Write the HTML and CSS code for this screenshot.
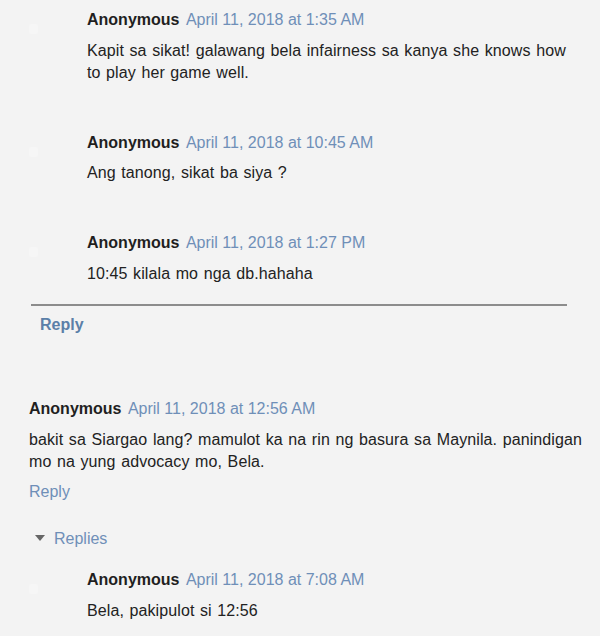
FILE: index.html
```html
<!DOCTYPE html>
<html>
<head>
<meta charset="utf-8">
<link rel="stylesheet" href="styles.css">
</head>
<body>
<div class="page">
  <div class="thread">
    <div class="comment nested first">
      <span class="avatar"></span>
      <div class="head"><span class="name">Anonymous</span> <a class="date">April 11, 2018 at 1:35 AM</a></div>
      <p class="text">Kapit sa sikat! galawang bela infairness sa kanya she knows how to play her game well.</p>
    </div>
    <div class="comment nested">
      <span class="avatar"></span>
      <div class="head"><span class="name">Anonymous</span> <a class="date">April 11, 2018 at 10:45 AM</a></div>
      <p class="text">Ang tanong, sikat ba siya ?</p>
    </div>
    <div class="comment nested">
      <span class="avatar"></span>
      <div class="head"><span class="name">Anonymous</span> <a class="date">April 11, 2018 at 1:27 PM</a></div>
      <p class="text">10:45 kilala mo nga db.hahaha</p>
    </div>
  </div>
  <a class="reply-bold">Reply</a>

  <div class="comment top">
    <div class="head"><span class="name">Anonymous</span> <a class="date">April 11, 2018 at 12:56 AM</a></div>
    <p class="text">bakit sa Siargao lang? mamulot ka na rin ng basura sa Maynila. panindigan mo na yung advocacy mo, Bela.</p>
    <a class="reply">Reply</a>
  </div>
  <div class="replies"><span class="tri"></span><a class="replies-link">Replies</a></div>
  <div class="comment nested last">
    <span class="avatar"></span>
    <div class="head"><span class="name">Anonymous</span> <a class="date">April 11, 2018 at 7:08 AM</a></div>
    <p class="text">Bela, pakipulot si 12:56</p>
  </div>
</div>
</body>
</html>
```

FILE: styles.css
```css
html, body {
  margin: 0;
  padding: 0;
  background: #f3f3f3;
}
body {
  font-family: "Liberation Sans", Arial, sans-serif;
  font-size: 16px;
  line-height: 22px;
  color: #222;
  width: 600px;
  height: 636px;
  overflow: hidden;
}
.page {
  padding-top: 9px;
}
.thread {
  margin-left: 31px;
  width: 536px;
  border-bottom: 2px solid #8c8c8c;
  padding-bottom: 19.5px;
}
.comment {
  position: relative;
}
.nested {
  padding-left: 56px;
  margin-top: 48px;
}
.nested.first {
  margin-top: 0;
}
.last {
  padding-left: 87px;
  margin-top: 19px;
}
.avatar {
  position: absolute;
  left: -2px;
  top: 15px;
  width: 9px;
  height: 10px;
  border-radius: 2px;
  background: #f6f6f6;
}
.last .avatar {
  left: 29px;
}
.head {
  height: 22px;
  white-space: nowrap;
}
.name {
  font-weight: bold;
  color: #1f1f1f;
}
.date {
  color: #6f8fb8;
  margin-left: 2px;
}
.text {
  margin: 8.5px 0 0 0;
  word-spacing: 1px;
  letter-spacing: 0.1px;
}
.reply-bold {
  display: block;
  margin: 8px 0 0 40px;
  font-weight: bold;
  color: #5b7fa8;
}
.top {
  margin: 62px 15px 0 29px;
}
.reply {
  display: block;
  margin-top: 8.5px;
  color: #6f8fb8;
}
.replies {
  margin: 25px 0 0 35px;
  display: flex;
  align-items: center;
  height: 22px;
}
.tri {
  width: 0;
  height: 0;
  border-left: 5px solid transparent;
  border-right: 5px solid transparent;
  border-top: 6px solid #666;
  margin-right: 9px;
  margin-top: -2px;
}
.replies-link {
  color: #6f8fb8;
}
```
